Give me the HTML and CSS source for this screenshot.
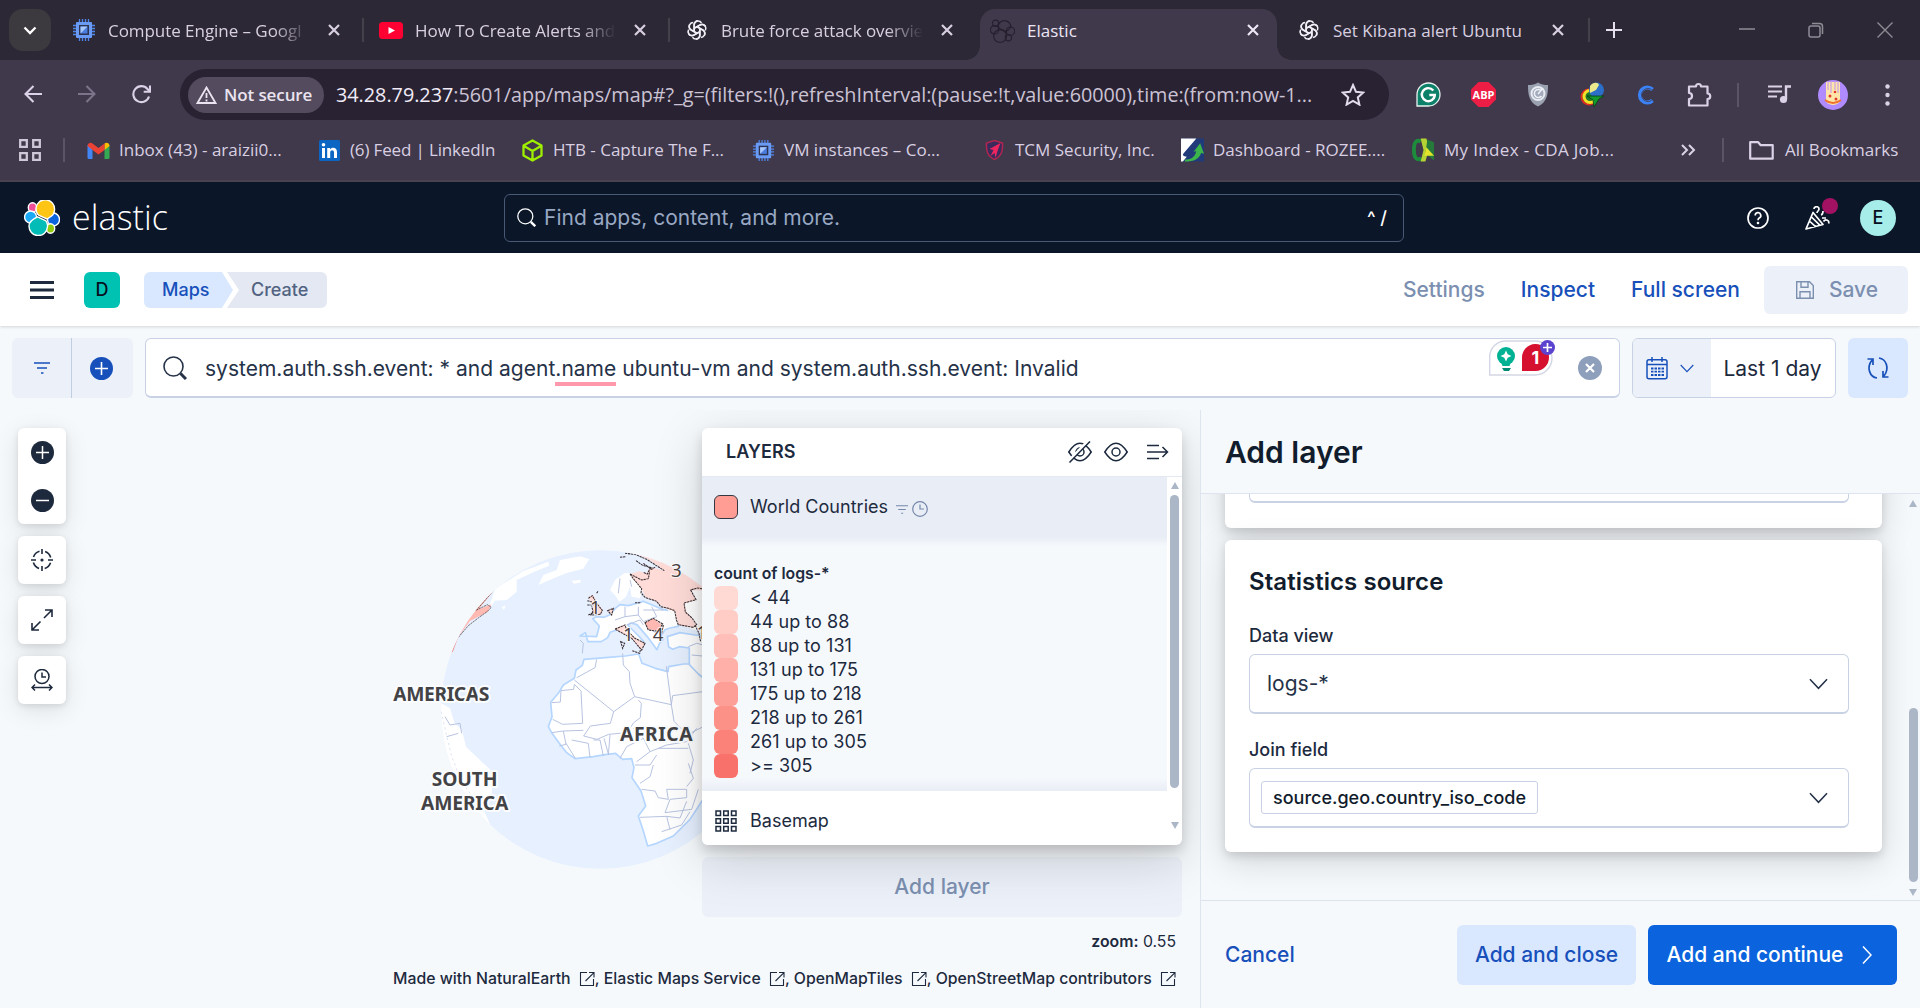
FILE: index.html
```html
<!DOCTYPE html>
<html lang="en">
<head>
<meta charset="utf-8">
<title>Elastic</title>
<link rel="stylesheet" href="styles.css">
</head>
<body>
<svg class="defs" aria-hidden="true">
  <symbol id="x" viewBox="0 0 12 12"><path d="M1 1l10 10M11 1L1 11" fill="none" stroke="currentColor" stroke-width="2.2"/></symbol>
  <symbol id="chip" viewBox="0 0 24 24"><path d="M7.5 1v22M10.5 1v22M13.5 1v22M16.5 1v22M1 7.5h22M1 10.5h22M1 13.5h22M1 16.5h22" stroke="#4f86ea" stroke-width="1.3"/><rect x="4" y="4" width="16" height="16" rx="1" fill="#6a9bf4"/><rect x="7" y="7" width="10" height="10" fill="#2d3350"/><path d="M8.500 8.500h7v7h-7z" fill="#4a7de0"/><path d="M8.500 8.500h7l-7 7z" fill="#a8c7fa"/></symbol>
  <symbol id="gpt" viewBox="0 0 24 24"><g fill="none" stroke="#f1eef6" stroke-width="1.7" stroke-linejoin="round"><path id="gp" d="M9 13.700V6.500c0-2.600 2-4.300 4.200-4.300 1.700 0 3 .9 3.700 2.100M9 10l6.200-3.600c2.200-1.200 4.800-.5 5.900 1.500"/><use href="#gp" transform="rotate(60 12 12)"/><use href="#gp" transform="rotate(120 12 12)"/><use href="#gp" transform="rotate(180 12 12)"/><use href="#gp" transform="rotate(240 12 12)"/><use href="#gp" transform="rotate(300 12 12)"/></g></symbol>
  <symbol id="popout" viewBox="0 0 16 16"><path d="M8 1.500H1.500v13h13V8M10 1.500h5V6.500M14.700 1.800L6.500 10" fill="none" stroke="currentColor" stroke-width="1.100"/></symbol>
  <symbol id="down" viewBox="0 0 20 12"><path d="M1 1l9 9.500L19 1" fill="none" stroke="currentColor" stroke-width="1.600"/></symbol>
  <symbol id="lens" viewBox="0 0 24 24"><g fill="none" stroke="currentColor"><circle cx="10.500" cy="10.500" r="9.500" stroke-width="1.600"/><path d="M17.500 17.500l5.500 5.500" stroke-width="3"/></g></symbol>
  <symbol id="filter" viewBox="0 0 16 12"><path d="M0 1h16M3 6h10M7 11h2.500" stroke="currentColor" stroke-width="1.600"/></symbol>
</svg>

<header class="chrome">
  <div class="tabs">
    <button class="tab-search"><svg width="14" height="9" viewBox="0 0 14 9"><path d="M1.500 1.500L7 7l5.500-5.500" fill="none" stroke="#fff" stroke-width="2.300"/></svg></button>
    <div class="tab"><svg width="23" height="24"><use href="#chip"/></svg><span class="tab-name fade">Compute Engine – Googl</span><svg class="tab-x"><use href="#x"/></svg></div>
    <div class="tab split"><svg width="24" height="17" viewBox="0 0 24 17"><rect width="24" height="17" rx="3.500" fill="#ff0033"/><path d="M9.500 5l6.500 3.500L9.500 12z" fill="#fff"/></svg><span class="tab-name fade">How To Create Alerts and</span><svg class="tab-x"><use href="#x"/></svg></div>
    <div class="tab split"><svg width="22" height="22"><use href="#gpt"/></svg><span class="tab-name fade">Brute force attack overvie</span><svg class="tab-x"><use href="#x"/></svg></div>
    <div class="tab active"><svg width="25" height="27" viewBox="0 0 36 36"><g fill="none" stroke="#25202f" stroke-width="1.600"><path d="M11.500 13a9.200 9.200 0 1 1 18.500 0M12 8q-1 5 3 8l8 3.500q7-4 7.500-9.500"/><circle cx="8" cy="7.500" r="4.500"/><circle cx="6.600" cy="17" r="6"/><circle cx="14.500" cy="26" r="9.300"/><circle cx="29.500" cy="19" r="6"/><circle cx="26.500" cy="28.500" r="4.500"/></g></svg><span class="tab-name">Elastic</span><svg class="tab-x"><use href="#x"/></svg></div>
    <div class="tab"><svg width="22" height="22"><use href="#gpt"/></svg><span class="tab-name">Set Kibana alert Ubuntu</span><svg class="tab-x"><use href="#x"/></svg></div>
    <div class="new-tab"><svg width="16" height="16" viewBox="0 0 16 16"><path d="M8 0v16M0 8h16" stroke="#e6dff0" stroke-width="2"/></svg></div>
    <div class="window-buttons">
      <svg width="16" height="16" viewBox="0 0 16 16"><path d="M0 7h16" stroke="#8f8c96" stroke-width="1.500"/></svg>
      <svg width="16" height="16" viewBox="0 0 16 16"><g fill="none" stroke="#8f8c96" stroke-width="1.500"><rect x="1" y="4" width="11" height="11" rx="2"/><path d="M4 1.500h7.500a3 3 0 0 1 3 3V12"/></g></svg>
      <svg width="16" height="16" viewBox="0 0 16 16"><path d="M.5.5l15 15M15.500.5l-15 15" stroke="#8f8c96" stroke-width="1.400"/></svg>
    </div>
  </div>

  <div class="toolbar">
    <div class="nav-icons">
      <svg width="18" height="18" viewBox="0 0 18 18"><path d="M18 9H2M9.500 1L1.500 9l8 8" fill="none" stroke="#dbd2e8" stroke-width="2.100"/></svg>
      <svg width="18" height="18" viewBox="0 0 18 18"><path d="M0 9h16M8.500 1l8 8-8 8" fill="none" stroke="#7c7489" stroke-width="2.100"/></svg>
      <svg width="19" height="19" viewBox="0 0 19 19"><path d="M17 11.500A8 8 0 1 1 15.500 4L18 6.500M18 .5v6.300h-6.300" fill="none" stroke="#dbd2e8" stroke-width="2.100"/></svg>
    </div>
    <div class="omnibox">
      <span class="insecure"><svg width="21" height="18" viewBox="0 0 21 18"><path d="M10.500 1.500l9 15.500h-18zM10.500 7v5M10.500 13.500v2" fill="none" stroke="#eae4f0" stroke-width="1.800"/></svg>Not secure</span>
      <span class="url"><b>34.28.79.237</b>:5601/app/maps/map#?_g=(filters:!(),refreshInterval:(pause:!t,value:60000),time:(from:now-1...</span>
      <svg class="star" width="24" height="23" viewBox="0 0 24 23"><path d="M12 2l3 6.800 7.300.7-5.500 4.900 1.600 7.200L12 17.800l-6.400 3.800 1.600-7.200L1.700 9.500 9 8.800z" fill="none" stroke="#e2dceb" stroke-width="2"/></svg>
    </div>
    <div class="extensions">
      <svg width="25" height="25" viewBox="0 0 25 25"><path d="M1 24V12.500A11.500 11.500 0 1 1 12.500 24z" fill="#0d8069" stroke="#e9f3f0" stroke-width="1.300"/><path d="M17.300 8.500a6.500 6.500 0 1 0 1.500 4.500h-5.500" fill="none" stroke="#fff" stroke-width="2.400"/></svg>
      <svg width="25" height="25" viewBox="0 0 25 25"><path d="M7.500 0h10L25 7.500v10L17.500 25h-10L0 17.500v-10z" fill="#ed1e45"/><text x="12.500" y="16.500" text-anchor="middle" class="abp">ABP</text></svg>
      <svg width="22" height="25" viewBox="0 0 22 25"><path d="M11 .5c3 2 6 2.500 10 2.500 0 10-1 17-10 21.500C2 20 1 13 1 3 5 3 8 2.500 11 .5z" fill="#9aa1b0"/><circle cx="11" cy="11.500" r="6.500" fill="#a3aabb" stroke="#e8ecf2" stroke-width="2"/><path d="M14.500 9a4 4 0 1 0 0 5M11 12l5-6" fill="none" stroke="#eef1f6" stroke-width="1.500"/></svg>
      <svg width="25" height="25" viewBox="0 0 25 25"><circle cx="9" cy="15" r="7.500" fill="#1c7c2c" stroke="#e02b20" stroke-width="2"/><circle cx="10" cy="14.500" r="6" fill="none" stroke="#f5e127" stroke-width="3"/><circle cx="16.500" cy="8" r="7.500" fill="#2b6fc9"/><path d="M10 4c3-4 8-4 9-1l-3 5-6 3z" fill="#ece98c"/><path d="M7 14h17l-5 3-5 8-1-7z" fill="#139a2c" stroke="#0b3c14" stroke-width=".8"/></svg>
      <svg width="18" height="20" viewBox="0 0 18 20"><path d="M16.500 4.500A7.500 7.500 0 1 0 16.500 15.500" fill="none" stroke="#3b82f6" stroke-width="4"/><path d="M15.500 4.500a6.500 6.500 0 1 0 0 11" fill="none" stroke="#403849" stroke-width=".8"/></svg>
      <svg width="25" height="25" viewBox="0 0 25 25"><path d="M2 4.500h7a2.500 2.500 0 0 1 5 0h6.500v7a2.500 2.500 0 0 1 0 5.500v6.500H2v-6.500a3 3 0 0 0 0-6z" fill="none" stroke="#dbd2e8" stroke-width="2.200" stroke-linejoin="round"/></svg>
    </div>
    <i class="rule"></i>
    <div class="profile">
      <svg width="23" height="19" viewBox="0 0 23 19"><path d="M0 1.500h14M0 6.500h14M0 11.500h9" stroke="#dbd2e8" stroke-width="2.200"/><path d="M18 14V1.500h5" fill="none" stroke="#dbd2e8" stroke-width="2.400"/><circle cx="15.500" cy="14.500" r="3.600" fill="#dbd2e8"/></svg>
      <svg width="30" height="30" viewBox="0 0 30 30"><circle cx="15" cy="15" r="15" fill="#b08bff"/><path d="M8 2h14v18a7 5 0 0 1-14 0z" fill="#ffe6a8"/><path d="M10 1v9M13 1v12M17 1v9M20 1v12" stroke="#c9a0e8" stroke-width="1.200"/><path d="M7 20q8 6 16 0" fill="none" stroke="#f0712c" stroke-width="2"/><g fill="#e33b2e"><circle cx="12" cy="16" r="1.500"/><circle cx="18" cy="19" r="1.500"/><circle cx="17" cy="12" r="1.300"/></g></svg>
      <svg width="5" height="22" viewBox="0 0 5 22"><g fill="#dbd2e8"><circle cx="2.500" cy="2.500" r="2.200"/><circle cx="2.500" cy="11" r="2.200"/><circle cx="2.500" cy="19.500" r="2.200"/></g></svg>
    </div>
  </div>

  <div class="bookmarks">
    <svg width="22" height="22" viewBox="0 0 22 22"><path d="M1.200 1.200h6.600v6.600H1.200zM14.200 1.200h6.600v6.600h-6.600zM1.200 14.200h6.600v6.600H1.200zM14.200 14.200h6.600v6.600h-6.600z" fill="none" stroke="#cfc8d8" stroke-width="2.300"/></svg>
    <i class="rule"></i>
    <div class="links">
      <a><svg width="22" height="17" viewBox="0 0 22 17"><path d="M0 3h5v14H1.500Q0 17 0 15.500z" fill="#4285f4"/><path d="M17 3h5v12.500q0 1.500-1.500 1.500H17z" fill="#34a853"/><path d="M17 1.500C19 0 22 1 22 4l-5 4z" fill="#fbbc04"/><path d="M5 8L0 4C0 1 3-.3 5 1.500L11 6l6-4.500V8l-6 4.500z" fill="#ea4335"/></svg>Inbox (43) - araizii0...</a>
      <a class="tight"><svg width="21" height="21" viewBox="0 0 21 21"><rect width="21" height="21" rx="1.500" fill="#0a66c2"/><path d="M3 8h3v10H3zM8.200 8H11v1.500c1.500-2.600 7-2.600 7 2.500v6h-3v-5.500c0-3-3.800-2.800-3.800 0V18h-3z" fill="#fff"/><circle cx="4.500" cy="4.700" r="1.800" fill="#fff"/></svg>(6) Feed | LinkedIn</a>
      <a><svg width="22" height="23" viewBox="0 0 22 23"><path d="M11 1.500l9 5v10l-9 5-9-5v-10zM2.500 7l8.500 5 8.500-5M11 12v9.500" fill="none" stroke="#9fef00" stroke-width="2.300" stroke-linejoin="round"/></svg>HTB - Capture The F...</a>
      <a><svg width="23" height="23"><use href="#chip"/></svg>VM instances – Co...</a>
      <a><svg width="18" height="20" viewBox="0 0 18 20"><path d="M9 .5l8 2.500c.5 8-1 13-8 16.500C2 16 .5 11 1 3z" fill="#3b2a5c" stroke="#b0264f" stroke-width="1.500"/><path d="M15 3L4 9l4 1-3 6 4-3 1 5 2-7z" fill="#ef2560"/></svg>TCM Security, Inc.</a>
      <a><svg width="24" height="24" viewBox="0 0 24 24"><path d="M0 0h24v24H0z" fill="#213a7a"/><path d="M0 0h16L3 15q-3 3 3 4l-4 5H0z" fill="#fff"/><path d="M4 22c8 0 11-4 12-9l-3 1 7-9 4 11-3-1c-2 6-7 9-17 9z" fill="#3bb54a"/></svg>Dashboard - ROZEE....</a>
      <a class="loose"><svg width="24" height="24" viewBox="0 0 24 24"><path d="M9 3Q2 0 2 12t8 9" fill="none" stroke="#1e8c3d" stroke-width="4"/><path d="M9 0h6l3 10-4 14H9l3-12z" fill="#b5d334"/><path d="M16 1l7 3v19l-9-7z" fill="#25793a"/><path d="M15 9l8 9H13z" fill="#e4e52b"/></svg>My Index - CDA Job...</a>
    </div>
    <svg width="15" height="12" viewBox="0 0 15 12"><path d="M1 1l5 5-5 5M8 1l5 5-5 5" fill="none" stroke="#dbd2e8" stroke-width="2"/></svg>
    <i class="rule"></i>
    <a class="all"><svg width="25" height="19" viewBox="0 0 25 19"><path d="M1.200 1.200h8l2.500 3h12v13.500H1.200z" fill="none" stroke="#dbd2e8" stroke-width="2.200" stroke-linejoin="round"/></svg>All Bookmarks</a>
  </div>
</header>

<div class="elastic-bar">
  <div class="brand">
    <svg width="36" height="36" viewBox="0 0 36 36"><g stroke="#fff" stroke-width="1.400"><ellipse cx="8.500" cy="7.500" rx="4.200" ry="4.700" fill="#f04e98"/><ellipse cx="6.600" cy="17" rx="6" ry="6" fill="#1ba9f5"/><ellipse cx="29.500" cy="19.500" rx="6" ry="6.500" fill="#0b64dd"/><ellipse cx="26.500" cy="28.500" rx="4.200" ry="4.700" fill="#93c90e"/><path d="M12 8a9.200 9.200 0 0 1 18.500 2c0 4-2 6-7.500 9l-8-3.500q-3-2-3-7.500z" fill="#fec514"/><path d="M13.500 16.800l8.500 4q2 3 1.500 6a9.200 9.200 0 0 1-18.500-1c0-4 3-6.500 8.500-9z" fill="#02bcb7"/></g></svg>
    <span>elastic</span>
  </div>
  <div class="global-search"><svg width="19" height="19"><use href="#lens"/></svg><span>Find apps, content, and more.</span><kbd>^ /</kbd></div>
  <div class="header-actions">
    <svg width="22" height="22" viewBox="0 0 22 22"><circle cx="11" cy="11" r="10" fill="none" stroke="#fff" stroke-width="1.700"/><path d="M8.200 8.500a2.800 2.800 0 1 1 4 2.500q-1.200.7-1.200 2.200" fill="none" stroke="#fff" stroke-width="1.700"/><circle cx="11" cy="16" r="1.300" fill="#fff"/></svg>
    <span class="cheer"><svg width="26" height="24" viewBox="0 0 26 24"><path d="M8 6.500L1 23l17-4.500zM6.500 11l8.500 8.300M5 15.500l5.500 5.200M9 3c0-3 5-3 5 0 0 2-2 2-2 4M16 9c2-.5 2-2 2-4M17 12h4M18.500 15.500c2-3 6.500-1 5 2" fill="none" stroke="#fff" stroke-width="1.700" stroke-linejoin="round"/></svg><i></i></span>
    <span class="avatar">E</span>
  </div>
</div>

<nav class="app-nav">
  <svg class="burger" width="24" height="18" viewBox="0 0 24 18"><path d="M0 1.500h24M0 9h24M0 16.500h24" stroke="#1d2a3e" stroke-width="3"/></svg>
  <span class="space">D</span>
  <div class="crumbs"><span class="crumb first">Maps</span><span class="crumb last">Create</span></div>
  <div class="menu">
    <a class="off">Settings</a><a>Inspect</a><a>Full screen</a>
    <button class="save"><svg width="18" height="18" viewBox="0 0 18 18"><path d="M.7.7h12.800l3.800 3.800v12.800H.7zM5 .7v5.500h7V.7M4 17.300v-6.500h10v6.500" fill="none" stroke="currentColor" stroke-width="1.400"/></svg>Save</button>
  </div>
</nav>

<div class="query-row">
  <div class="filter-group">
    <button><svg width="16" height="12"><use href="#filter"/></svg></button>
    <button><svg width="23" height="23" viewBox="0 0 23 23"><circle cx="11.500" cy="11.500" r="11.500" fill="#1750ba"/><path d="M11.500 5v13M5 11.500h13" stroke="#fff" stroke-width="1.600"/></svg></button>
  </div>
  <div class="query">
    <svg width="24" height="24"><use href="#lens"/></svg>
    <span class="query-text">system.auth.ssh.event: * and agent<u>.name</u> ubuntu-vm and system.auth.ssh.event: Invalid</span>
    <span class="assistant"><svg width="64" height="36" viewBox="0 0 64 36"><path d="M.7 35V17A16 16 0 0 1 17 1h29a17 17 0 0 1 0 34z" fill="#fff" stroke="#d3d6e4" stroke-width="1.400"/><circle cx="17" cy="16" r="9" fill="#00b294"/><path d="M12 22h10l-1.500 4h-7z" fill="#00b294"/><path d="M13 28h9l-2 3h-5z" fill="#008a75"/><path d="M17 10.500l1.700 3.800 3.800 1.700-3.800 1.700-1.700 3.800-1.700-3.800-3.800-1.700 3.800-1.700z" fill="#fff"/><path d="M33 31V18a13.500 13.500 0 1 1 13.500 13z" fill="#d6112f"/><text x="46.500" y="24" text-anchor="middle" class="count">1</text></svg><svg class="plus" width="15" height="15" viewBox="0 0 15 15"><circle cx="7.500" cy="7.500" r="7.500" fill="#5b43d0"/><path d="M7.500 3v9M3 7.500h9" stroke="#fff" stroke-width="1.700"/></svg></span>
    <svg class="clear" width="24" height="24" viewBox="0 0 24 24"><circle cx="12" cy="12" r="12" fill="#8e9fbc"/><path d="M8 8l8 8M16 8l-8 8" stroke="#fff" stroke-width="2.200"/></svg>
  </div>
  <div class="dates">
    <span class="quick"><svg width="22" height="23" viewBox="0 0 22 23"><path d="M3 2.700h16q2 0 2 2v15q0 2-2 2H3q-2 0-2-2v-15q0-2 2-2zM1 7.500h20M6 0v5M16 0v5" fill="none" stroke="#1750ba" stroke-width="1.500"/><path d="M5 11.500h13M5 14.700h13M5 18h13" stroke="#1750ba" stroke-width="1.800" stroke-dasharray="2.500 1"/></svg><svg width="14" height="9"><use href="#down"/></svg></span>
    <span class="range">Last 1 day</span>
  </div>
  <button class="refresh"><svg width="24" height="24" viewBox="0 0 24 24"><path d="M11 22C4 21 0 12 6 4M1.500 3h5.500v6M13 2c7 1 11 10 5 18M22.500 21H17v-6" fill="none" stroke="currentColor" stroke-width="1.700"/></svg></button>
</div>

<div class="workspace">
  <main class="map">
    <svg class="globe" width="330" height="350" viewBox="0 0 990 1050">
      <clipPath id="disc"><circle cx="661" cy="538.500" r="478"/></clipPath>
      <circle cx="661" cy="538.500" r="478" fill="#e6f0ff"/>
      <g clip-path="url(#disc)">
        <g fill="#fff" stroke="#b5d6ff" stroke-width="5" stroke-linejoin="round">
          <path d="M612 388l-5 18-19 14-5 25-33 20-15 25-23 27 4 43-11 30 10 18 23 32 22 28 25 18 55-6 40-7 27-3 21 18 27-2 7 27-6 30 27 40 14 45-22 30 15 45 13 45 27-8 50-22 50-50 36-55 60-60V470l-35-30-25-38-55 0-45 8-2 15-38-10-40-15-10-28-40 6-50 4z"/>
          <path d="M600 318l50 2 8-32-20-22 12-6 22 2 18-8 15-18 15-12 25 3 45-13 60 25 40 5 5 45-25 5-15 5-10 16 6 12-12 12-8 20-30-40-30-35-18-5-10 6 30 30 18 20-8 10-36-28-28-22-7 4-22 8-7 16-19 12-40 0-8-27z"/>
          <path d="M862 320l38-12 45 7 45 5v140l-35-28-27-28 0-50-30-4-20 8-12-7z"/>
        </g>
        <g fill="#fff">
          <path d="M690 180l15-30 30-22 22 3 40 20-7 25-10 29-25-5-5-30-12 30-20 16-13-20zM475 165l15-30 40-15 10-30 60-11 28 8-18 29-50 13-60 25zM575 152l28-3-2 9-20 3zM344 178l86-55 75-28 3 12-38 15-60 28v35l-30 25-35 2-20 28zM365 232l12-6-5 14z"/>
          <path d="M184 520l26 15 14 45 22 20 12 50 52 50 22 20 4 70-30 40 24 52-60 20L150 700z"/>
          <path d="M915 120l80 60v140l-50-20-55-20-30-45z"/>
        </g>
        <g fill="none" stroke="#b7c3e0" stroke-width="3">
          <path d="M583 450l118 95 63-45-14-40-2-35-18-20-2-35M583 463l-2 15-38 4-2 34-26 2M583 463l22 22M650 388l-5 25-55 30M764 500l110 24-15-115M874 524l4-27 112-15M603 485l5 95-60 3-30-15M701 545l-10 35-60 8-20 30 40 10 35-15 55-5 20-30 20-15 3-43-9-10M515 608l35-5 8 40-20 5M550 603l60-2M558 640l28 45M575 630l50 10 5 42M640 630l20 0 10 48M672 625l14 50M690 615l-5 60M720 685l20-35 50-25-30-30M790 625l20 40-40 30M810 665l50-20 60-10 30-40M874 524l8 50 40 40 60-30M765 705l45 0 20-30M780 760l30-20 10-35M785 778l40 5 10 20 30 5-5-30 60 0 0 25-50 5-15 40 80-10 20-60M780 862l80-3 10 40M860 859l40 5 20-50M845 905l60-20 25-40M925 700l15 45-20 25M925 640l15 50-10 40M835 655l90 0"/>
          <path d="M705 270l30-10 0-30M735 260l40-5 15 20 40-15-15-30M740 285l40-15 10 15M775 255l0-25M600 330l10 10-3 30M720 145l-5 45M750 150l5 20M790 240l60 0M800 290l30 20 20 0M925 350l25-10 40 10M935 375l55 5M195 560l15 25 30-5 5 30M200 620l35-10"/>
        </g>
        <path d="M184 545l12 55 18 75 30 80 60 80" fill="none" stroke="#c8d6ef" stroke-width="2" stroke-dasharray="7 9"/>
        <g fill="#ffdcd8">
          <path d="M750 132l28-8 22 6 10-18 40 8-40-30-45-20 50-5 80 40 110 80-17-4-56 0 16 29-36 10 8 27 30 38-10 8-45-8-10-40-30-10-25-20-35-15-10-25-25-30z"/>
          <path d="M625 200l15-5 10 20 18 25-8 15-25-5 5-20zM705 295l30-10 5 15 25 25 30 15-10 20-30-35-45-25zM683 240l17-5-5 20z"/>
          <path d="M795 278l25-13 25 20-10 17-30-4z" fill="#ffb9b2"/>
          <path d="M190 400l20-110 70-90 66-24-50 62 38-15-10 22-54 28-35 48-20 47z" fill="#ffbab3"/>
        </g>
        <g fill="none" stroke="#3c3033" stroke-width="3.200" stroke-dasharray="7 2">
          <path d="M720 82l18-2M735 70l30 3 35 15 28 18 25 16M768 92l20 14 30 8M790 100l25 18 12-8M812 112l-10 20-12-5M750 132l35 18 20-4 4-22M750 132l10 14 25 30-2 12 12 14 35 12 12 16 20 4 22 8 6 30 5 12 45 8 10-8-14-20-20-18-4-27 36-10-16-29 20-6 36 6"/>
          <path d="M625 205l12-8 12 22 18 22-6 12-28 2 6-12-4-14M622 225l20 0M622 212l14 4M650 190l5-8M625 255l18-8M705 297l30-12 5 15 25 25 30 15-10 20-30-35-45-25zM722 335l12 5-6 15zM757 362l22 8 2-10M683 242l17-7-5 20zM765 218l18 0M795 278l25-13 28 17-13 22-30-4zM945 285l12 25 5 25M850 285l-5 25"/>
          <path d="M235 322l30-35 35-27 20-14 14-14-12-8-32 16M288 242l54-62" stroke-width="2"/>
          <path d="M217 366l16-44" stroke="#e88078" stroke-width="2.500" stroke-dasharray="none"/>
        </g>
      </g>
      <g class="counts"><text x="646" y="252">1</text><text x="745" y="332">1</text><text x="834" y="332">4</text><text x="889" y="140">3</text><text x="966" y="326">1</text></g>
      <g class="places"><text x="184" y="514" textLength="289">AMERICAS</text><text x="829" y="634" textLength="218">AFRICA</text><text x="254" y="769" textLength="198">SOUTH</text><text x="254" y="839" textLength="262">AMERICA</text></g>
    </svg>

    <div class="map-tools">
      <div class="tool zooms">
        <svg width="23" height="23" viewBox="0 0 23 23"><circle cx="11.500" cy="11.500" r="11.500" fill="#1d2a3e"/><path d="M11.500 5v13M5 11.500h13" stroke="#fff" stroke-width="1.500"/></svg>
        <svg width="23" height="23" viewBox="0 0 23 23"><circle cx="11.500" cy="11.500" r="11.500" fill="#1d2a3e"/><path d="M5 11.500h13" stroke="#fff" stroke-width="1.500"/></svg>
      </div>
      <div class="tool"><svg width="22" height="22" viewBox="0 0 22 22"><g fill="none" stroke="#1d2a3e" stroke-width="1.600"><circle cx="11" cy="11" r="9" stroke-dasharray="8.400 5.740" stroke-dashoffset="-2.900"/><path d="M11 0v5M11 17v5M0 11h5M17 11h5"/></g><circle cx="11" cy="11" r="1.600" fill="#1d2a3e"/></svg></div>
      <div class="tool"><svg width="22" height="22" viewBox="0 0 22 22"><path d="M13 9l8-8M14 1h7v7M9.500 12.500L1 21M1 14v7h7" fill="none" stroke="#1d2a3e" stroke-width="1.600"/></svg></div>
      <div class="tool"><svg width="22" height="22" viewBox="0 0 22 22"><g fill="none" stroke="#1d2a3e" stroke-width="1.500"><circle cx="11" cy="7.500" r="7"/><path d="M11 3.500V8h4M1 18.500h20M4 15.500l-3 3 3 3M18 15.500l3 3-3 3"/></g></svg></div>
    </div>

    <section class="layers-column">
      <div class="layers">
        <div class="layers-head">
          <h2>LAYERS</h2>
          <svg width="24" height="22" viewBox="0 0 24 22"><path d="M.8 11q11.200-17.500 22.400 0-11.200 17.500-22.400 0z" fill="none" stroke="#1d2a3e" stroke-width="1.500"/><circle cx="12" cy="11" r="4" fill="none" stroke="#1d2a3e" stroke-width="1.500"/><path d="M0 21L20 0" stroke="#fff" stroke-width="3"/><path d="M1.500 21.500L22 .5" stroke="#1d2a3e" stroke-width="1.500"/></svg>
          <svg width="24" height="22" viewBox="0 0 24 22"><path d="M.8 11q11.200-17.500 22.400 0-11.200 17.500-22.400 0z" fill="none" stroke="#1d2a3e" stroke-width="1.500"/><circle cx="12" cy="11" r="4" fill="none" stroke="#1d2a3e" stroke-width="1.500"/></svg>
          <svg class="collapse" width="22" height="16" viewBox="0 0 22 16"><path d="M0 1.500h12M0 8h20.500M0 14.500h12M15.500 3l5 5-5 5" fill="none" stroke="#1d2a3e" stroke-width="1.500"/></svg>
        </div>
        <div class="layers-body">
          <div class="layers-list">
            <div class="layer"><i class="swatch outlined"></i>World Countries<svg class="f" width="12" height="9"><use href="#filter"/></svg><svg width="16" height="16" viewBox="0 0 16 16"><circle cx="8" cy="8" r="7.300" fill="none" stroke="#7488ab" stroke-width="1.200"/><path d="M8 3.500V8h4" fill="none" stroke="#7488ab" stroke-width="1.200"/></svg></div>
            <div class="legend">
              <h3>count of logs-*</h3>
              <ul><li><i class="swatch s1"></i>&lt; 44</li><li><i class="swatch s2"></i>44 up to 88</li><li><i class="swatch s3"></i>88 up to 131</li><li><i class="swatch s4"></i>131 up to 175</li><li><i class="swatch s5"></i>175 up to 218</li><li><i class="swatch s6"></i>218 up to 261</li><li><i class="swatch s7"></i>261 up to 305</li><li><i class="swatch s8"></i>&gt;= 305</li></ul>
            </div>
            <div class="basemap"><svg width="22" height="22" viewBox="0 0 22 22"><path d="M1 1h4.500v4.500H1zM8.700 1h4.500v4.500H8.700zM16.500 1H21v4.500h-4.500zM1 8.700h4.500v4.500H1zM8.700 8.700h4.500v4.500H8.700zM16.500 8.700H21v4.500h-4.500zM1 16.500h4.500V21H1zM8.700 16.500h4.500V21H8.700zM16.500 16.500H21V21h-4.500z" fill="none" stroke="#1d2a3e" stroke-width="1.500"/></svg>Basemap</div>
          </div>
          <div class="scroll"><b class="up"></b><i></i><b class="dn"></b></div>
        </div>
      </div>
      <button class="add-layer">Add layer</button>
    </section>
    <div class="map-foot">
      <p class="zoom"><b>zoom:</b> 0.55</p>
      <p>Made with NaturalEarth <svg><use href="#popout"/></svg>, Elastic Maps Service <svg><use href="#popout"/></svg>, OpenMapTiles <svg><use href="#popout"/></svg>, OpenStreetMap contributors <svg><use href="#popout"/></svg></p>
    </div>
  </main>

  <aside class="flyout">
    <h1>Add layer</h1>
    <div class="flyout-body">
      <div class="cards">
        <div class="card top"><div class="field"></div></div>
        <div class="card">
          <h2>Statistics source</h2>
          <label>Data view</label>
          <div class="field">logs-*<svg><use href="#down"/></svg></div>
          <label>Join field</label>
          <div class="field combo"><span class="pill">source.geo.country_iso_code</span><svg><use href="#down"/></svg></div>
        </div>
      </div>
      <div class="scroll"><b class="up"></b><i></i><b class="dn"></b></div>
    </div>
    <footer><a>Cancel</a><button class="light">Add and close</button><button class="primary">Add and continue<svg width="10" height="18" viewBox="0 0 10 18"><path d="M1 .5l8 8.500-8 8.500" fill="none" stroke="#fff" stroke-width="1.500"/></svg></button></footer>
  </aside>
</div>
</body>
</html>
```
FILE: styles.css
```css
* { box-sizing: border-box; }
body { margin: 0; width: 1920px; height: 1008px; overflow: hidden; display: flex; flex-direction: column; background: #f6f9fc; color: #1d2a3e; font: 400 18px/24px Inter, "Liberation Sans", sans-serif; }
.defs { position: absolute; width: 0; height: 0; }
svg { display: block; flex: none; }
button { border: 0; padding: 0; font: inherit; color: inherit; display: flex; align-items: center; justify-content: center; }
h1, h2, h3, p, ul { margin: 0; padding: 0; list-style: none; }

/* browser window */
.chrome { height: 182px; flex: none; background: #40384b; border-bottom: 2px solid #4a434f; font-family: "Open Sans", "Noto Sans", sans-serif; font-size: 17px; color: #d8d0e2; }
.tabs { height: 60px; display: flex; align-items: center; background: #2d2835; }
.tab-search { width: 42px; height: 42px; margin: 0 7px 0 9px; border-radius: 14px; background: #3d3a3f; }
.tab { position: relative; width: 306px; height: 60px; display: flex; align-items: center; padding: 0 24px 0 15px; }
.tab > svg:first-child { margin-right: 12px; width: 24px; }
.tab:nth-of-type(1) { padding-left: 14px; }
.tab.split::before { content: ""; position: absolute; left: -2px; top: 18px; width: 2px; height: 24px; background: #45414b; }
.tab-name { flex: 1; white-space: nowrap; padding-top: 2px; }
.fade { margin-right: 18px; letter-spacing: -.05px; -webkit-mask-image: linear-gradient(90deg, #000 82%, transparent); mask-image: linear-gradient(90deg, #000 82%, transparent); }
.tab-x { width: 12px; height: 12px; }
.tab.active { height: 51px; align-self: flex-end; margin: 0 6px 0 4px; width: 297px; padding: 0 18px 9px 10px; background: #40384b; border-radius: 15px 15px 0 0; color: #ece6f4; }
.tab.active > svg:first-child { width: 25px; }
.tab.active + .tab { width: 305px; padding-left: 14px; }
.tab.active::before, .tab.active::after { content: ""; position: absolute; bottom: 0; width: 14px; height: 14px; }
.tab.active::before { left: -14px; background: radial-gradient(circle at 0 0, transparent 13.500px, #40384b 14px); }
.tab.active::after { right: -14px; background: radial-gradient(circle at 100% 0, transparent 13.500px, #40384b 14px); }
.new-tab { border-left: 2px solid #45414b; height: 24px; padding: 4px 0 0 16px; }
.window-buttons { margin-left: auto; padding-right: 27px; display: flex; gap: 53px; }

.toolbar { height: 69px; display: flex; align-items: center; }
.nav-icons { width: 180px; display: flex; gap: 36px; padding-left: 24px; }
.omnibox { width: 1209px; height: 51px; border-radius: 26px; background: #292233; display: flex; align-items: center; padding: 0 24px 0 8px; }
.insecure { width: 136px; height: 36px; border-radius: 18px; background: #544c5e; display: flex; align-items: center; gap: 7px; padding-left: 8px; font-weight: 600; letter-spacing: -.1px; color: #eae4f0; }
.url { margin-left: 12px; font-size: 19.8px; letter-spacing: -.01px; white-space: nowrap; flex: 1; color: #cbc3d4; }
.url b { font-weight: 400; color: #f1ecf7; }
.extensions { width: 296px; margin-left: 27px; display: flex; justify-content: space-between; align-items: center; }
.extensions svg:nth-child(n+2):nth-child(-n+5) { position: relative; left: -1.500px; }
.abp { font: 700 11px "Open Sans", sans-serif; fill: #fff; }
.rule { display: block; width: 2px; height: 24px; background: #5b5366; flex: none; }
.extensions + .rule { margin-left: 25px; }
.profile { display: flex; align-items: center; margin-left: 29px; }
.profile svg + svg { margin-left: 27px; }
.profile svg:last-child { margin-left: 37px; }

.bookmarks { height: 42px; display: flex; align-items: center; padding-left: 19px; }
.links { margin-left: 22px; display: grid; grid-template-columns: 231px 203px 231px 231px 198px 231px 269px; }
.links a, .all { display: flex; align-items: center; white-space: nowrap; }
.links svg { margin-right: 9px; width: 23px; }
.links .tight { letter-spacing: -.15px; }
.links .loose { letter-spacing: .33px; }
.bookmarks > svg + .rule { margin-left: 26px; }
.bookmarks > svg:first-child + .rule { margin-left: 22px; }
.all { margin-left: 25px; gap: 11px; }

/* Elastic global header */
.elastic-bar { height: 71px; flex: none; display: flex; align-items: center; background: #0b1628; color: #fff; padding: 0 24px; }
.brand { width: 480px; display: flex; align-items: center; gap: 12px; }
.brand span { font: 300 34px/36px "Open Sans", sans-serif; padding-bottom: 1px; letter-spacing: .1px; }
.global-search { width: 900px; height: 48px; border: 1px solid #485975; border-radius: 6px; display: flex; align-items: center; padding: 0 16px 0 12px; font-size: 21px; color: #98a8c3; }
.global-search svg { color: #fff; margin-right: 8px; }
.global-search kbd { margin-left: auto; font: 500 18px Inter, sans-serif; color: #fff; }
.header-actions { margin-left: auto; display: flex; align-items: center; }
.cheer { position: relative; margin: 0 29px 0 36px; }
.cheer i { position: absolute; width: 16px; height: 16px; border-radius: 50%; background: #a11262; left: 17px; top: -8px; }
.avatar { width: 36px; height: 36px; border-radius: 50%; background: #a6edea; color: #07101f; text-align: center; line-height: 36px; font-weight: 500; }

.app-nav { height: 73px; flex: none; background: #fff; display: flex; align-items: center; padding: 1px 12px 0 30px; box-shadow: 0 1px 3px rgba(0, 0, 0, .14); position: relative; }
.space { width: 36px; height: 36px; margin: 0 24px 0 30px; border-radius: 6px; background: #00c2b3; color: #07101f; text-align: center; line-height: 36px; font-weight: 500; }
.crumbs { display: flex; font-weight: 500; line-height: 36px; }
.crumb { height: 36px; }
.first { width: 89px; padding-left: 18px; background: #d9e8ff; color: #1750ba; border-radius: 6px 0 0 6px; clip-path: polygon(0 0, 78px 0, 100% 50%, 78px 100%, 0 100%); }
.last { width: 100px; margin-left: -6px; padding-left: 24px; background: #e3e8f2; color: #516381; border-radius: 0 6px 6px 0; clip-path: polygon(0 0, 100% 0, 100% 100%, 0 100%, 12px 50%); }
.menu { margin-left: auto; display: flex; align-items: center; font-size: 21px; font-weight: 500; color: #1750ba; }
.menu a { margin-right: 36px; }
.menu .off { color: #7b8fb0; }
.menu a:nth-of-type(3) { margin-right: 24px; }
.save { width: 144px; height: 48px; border-radius: 6px; background: #ecf1f9; color: #7b8fb0; gap: 15px; padding-left: 2px; }

.query-row { height: 84px; flex: none; display: flex; padding: 12px 12px 12px; }
.filter-group { display: flex; width: 121px; border-radius: 6px; overflow: hidden; background: #ecf1f9; color: #1750ba; }
.filter-group button { flex: 1; background: none; }
.filter-group button + button { border-left: 1px solid #c1cde1; padding-right: 2px; }
.query { position: relative; width: 1475px; margin: 0 12px; background: #fff; border: 1px solid #c8d2e4; border-width: 1px 1px 2px; border-radius: 6px; display: flex; align-items: center; padding: 0 17px; font-size: 21px; color: #253248; }
.query-text { margin-left: 18px; white-space: nowrap; letter-spacing: .015px; padding-top: 2px; }
.query u { text-decoration: none; padding-bottom: 1px; border-bottom: 4px solid #ff98ad; }
.assistant { position: absolute; left: 1343px; top: 1px; }
.count { font: 700 18px Inter, sans-serif; fill: #fff; }
.plus { position: absolute; left: 51px; top: 0; }
.clear { margin-left: auto; }
.dates { width: 204px; border: 1px solid #c8d2e4; border-radius: 6px; background: #fff; display: flex; overflow: hidden; font-size: 21px; }
.quick { width: 78px; background: #ecf1f9; color: #1750ba; display: flex; align-items: center; justify-content: space-between; padding: 0 17px 0 13px; }
.range { margin: auto; white-space: nowrap; padding: 2px 1px 0 0; }
.refresh { width: 60px; margin-left: 12px; border-radius: 6px; background: #d9e8ff; color: #1750ba; }

/* map and flyout */
.workspace { flex: 1; display: flex; min-height: 0; }
.map { position: relative; width: 1200px; display: flex; flex-direction: column; overflow: hidden; padding-top: 18px; }
.globe { position: absolute; left: 380px; top: 120px; }
.places { font: 700 58px "Noto Sans", sans-serif; fill: #434346; stroke: #fafcfe; stroke-width: 12px; stroke-linejoin: round; paint-order: stroke; text-anchor: middle; }
.counts { font: 400 56px "Noto Sans", sans-serif; fill: #4a4142; stroke: #fff; stroke-opacity: .8; stroke-width: 6px; paint-order: stroke; text-anchor: middle; }
.map-tools { position: absolute; left: 18px; top: 18px; display: flex; flex-direction: column; gap: 12px; }
.tool { width: 48px; height: 48px; background: #fff; border-radius: 6px; display: flex; align-items: center; justify-content: center; box-shadow: 0 2px 6px rgba(0, 0, 0, .1), 0 6px 24px rgba(0, 0, 0, .1); }
.zooms { height: 96px; flex-direction: column; gap: 25px; }
.layers-column { position: relative; width: 480px; margin-left: 702px; }
.layers { position: relative; z-index: 1; height: 417px; background: #fff; border-radius: 6px; box-shadow: 0 6px 12px rgba(0, 0, 0, .15), 0 14px 50px rgba(0, 0, 0, .17); overflow: hidden; }
.layers-head { height: 49px; border-bottom: 1px solid #e3e8f2; display: flex; align-items: center; padding: 0 13px 0 24px; }
.layers-head h2 { font-size: 18px; font-weight: 600; margin-right: auto; letter-spacing: .1px; }
.layers-head svg + svg { margin-left: 12px; }
.layers-head .collapse { margin-left: 19px; }
.layers-body { display: flex; height: 368px; }
.layers-list { width: 465px; }
.layer { height: 60px; background: #e9edf5; display: flex; align-items: center; padding: 0 12px; letter-spacing: .03px; }
.layer .f { margin: 5px 4px 0 8px; color: #7488ab; }
.layer svg:last-child { margin-top: 4px; }
.swatch { width: 24px; height: 24px; border-radius: 6px; margin-right: 12px; flex: none; }
.outlined { background: #ff9d95; border: 1px solid #343741; }
.legend { height: 254px; padding: 26px 12px 0; background: linear-gradient(#e9edf5, #f6f9fc 10px, #f6f9fc 240px, #e9edf5); }
.legend h3 { font-size: 15.800px; font-weight: 600; line-height: 22px; }
.legend li { display: flex; line-height: 24px; height: 24px; letter-spacing: .05px; }
.legend ul { padding-top: 1px; }
.s1 { background: #ffd9d4; } .s2 { background: #ffccc6; } .s3 { background: #ffbeb7; } .s4 { background: #ffb0a8; }
.s5 { background: #fe9f97; } .s6 { background: #fc9188; } .s7 { background: #fa8279; } .s8 { background: #f8716b; }
.basemap { height: 54px; background: #fff; display: flex; align-items: center; padding: 6px 13px 0; gap: 13px; }
.scroll { position: relative; flex: 1; display: flex; flex-direction: column; align-items: center; }
.scroll i { width: 9px; border-radius: 5px; background: #abb6c7; }
.scroll b { border: 4.500px solid transparent; border-top: 0; border-bottom: 7px solid #abb6c7; }
.scroll .dn { border-bottom: 0; border-top: 7px solid #abb6c7; margin-top: auto; }
.layers .scroll { padding: 5px 0 16px; }
.layers .scroll i { height: 293px; margin-top: 6px; }
.add-layer { width: 480px; height: 60px; margin-top: 12px; border-radius: 6px; background: #ecf1f9; color: #7b8fb0; font-size: 21px; font-weight: 500; }
.map-foot { padding: 13px 24px 0 0; text-align: right; font-size: 15.800px; }
.map-foot .zoom b { font-weight: 600; }
.map-foot p + p { margin-top: 13px; font-weight: 500; white-space: nowrap; letter-spacing: .01px; }
.map-foot svg { display: inline-block; width: 16px; height: 16px; vertical-align: -3px; margin-left: 4px; }

.flyout { width: 720px; border-left: 1px solid #dfe5ef; display: flex; flex-direction: column; }
.flyout h1 { height: 84px; padding: 26px 0 0 24px; font-size: 30px; font-weight: 600; line-height: 32px; color: #111c2c; border-bottom: 1px solid #dde4f0; flex: none; }
.flyout-body { height: 406px; display: flex; overflow: hidden; }
.cards { width: 705px; padding: 0 24px; }
.card { width: 657px; height: 312px; padding: 0 33px 0 24px; border-radius: 6px; background: #fff; box-shadow: 0 4px 10px rgba(0, 0, 0, .13), 0 10px 34px rgba(0, 0, 0, .14); }
.card + .card { position: relative; margin-top: 12px; }
.top { height: 134px; margin-top: -100px; padding-top: 49px; }
.card h2 { padding: 26px 0 24px; font-size: 24px; line-height: 32px; font-weight: 600; color: #111c2c; letter-spacing: .05px; }
.card label { display: block; font-weight: 500; line-height: 28px; padding-bottom: 4px; height: 32px; }
.field { height: 60px; border: 1px solid #c8d2e4; border-width: 1px 1px 2px; border-radius: 6px; display: flex; align-items: center; justify-content: space-between; padding: 0 20px 0 17px; font-size: 21px; color: #253248; }
.field svg { width: 19px; height: 12px; }
.card .field + label { margin-top: 22px; }
.combo { padding-left: 11px; }
.pill { height: 33px; width: 277px; border: 1px solid #c8d2e4; border-radius: 3px; font-size: 18px; font-weight: 500; line-height: 31px; text-align: center; color: #111c2c; }
.flyout .scroll { padding: 6px 0 4px; align-items: flex-start; padding-left: 3px; }
.flyout .scroll i { height: 174px; margin-top: 201px; }
.flyout footer { flex: 1; border-top: 1px solid #dde4f0; display: flex; align-items: flex-start; padding: 24px 23px 0 24px; font-size: 21px; font-weight: 500; color: #1750ba; line-height: 60px; }
.flyout footer button { height: 60px; border-radius: 6px; }
.flyout .light { width: 179px; margin-left: auto; background: #d9e8ff; }
.flyout .primary { width: 249px; margin-left: 12px; background: #0b64dd; color: #fff; gap: 19px; padding-right: 6px; }
```
